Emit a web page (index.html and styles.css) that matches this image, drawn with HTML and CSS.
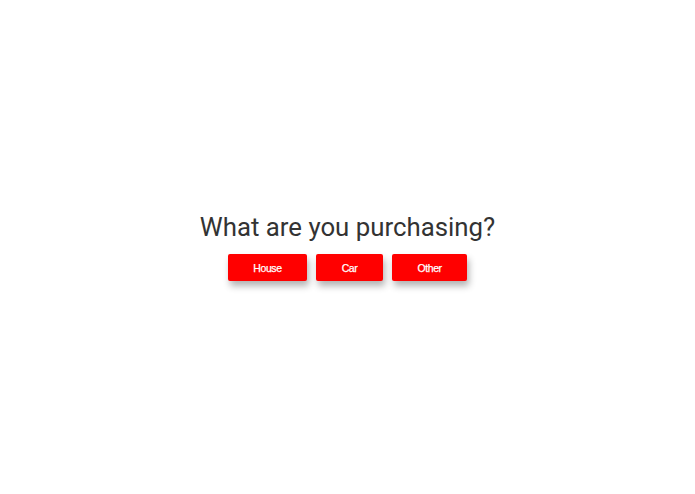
FILE: index.html
```html
<!DOCTYPE html>
<html>
<head>
<meta charset="utf-8">
<link rel="stylesheet" href="styles.css">
</head>
<body>
<div class="page">
  <h1 class="title">What are you purchasing?</h1>
  <div class="choices">
    <button class="btn">House</button>
    <button class="btn">Car</button>
    <button class="btn">Other</button>
  </div>
</div>
</body>
</html>
```
FILE: styles.css
```css
html, body {
  margin: 0;
  padding: 0;
  background: #fff;
}
.page {
  height: 494px;
  display: flex;
  flex-direction: column;
  align-items: center;
  justify-content: center;
}
.title {
  margin: 0 0 13px 0;
  font-family: Roboto, sans-serif;
  font-weight: 400;
  font-size: 25.8px;
  line-height: 28px;
  color: #333;
}
.choices {
  display: flex;
  gap: 9px;
}
.btn {
  height: 27px;
  padding: 0 25.5px;
  border: none;
  border-radius: 2px;
  background: #ff0000;
  color: #fff;
  font-family: "Liberation Sans", Arial, sans-serif;
  font-size: 10.5px;
  letter-spacing: -0.4px;
  -webkit-text-stroke: 0.25px #fff;
  box-shadow: 2px 5px 7px rgba(0,0,0,0.3);
}
```
